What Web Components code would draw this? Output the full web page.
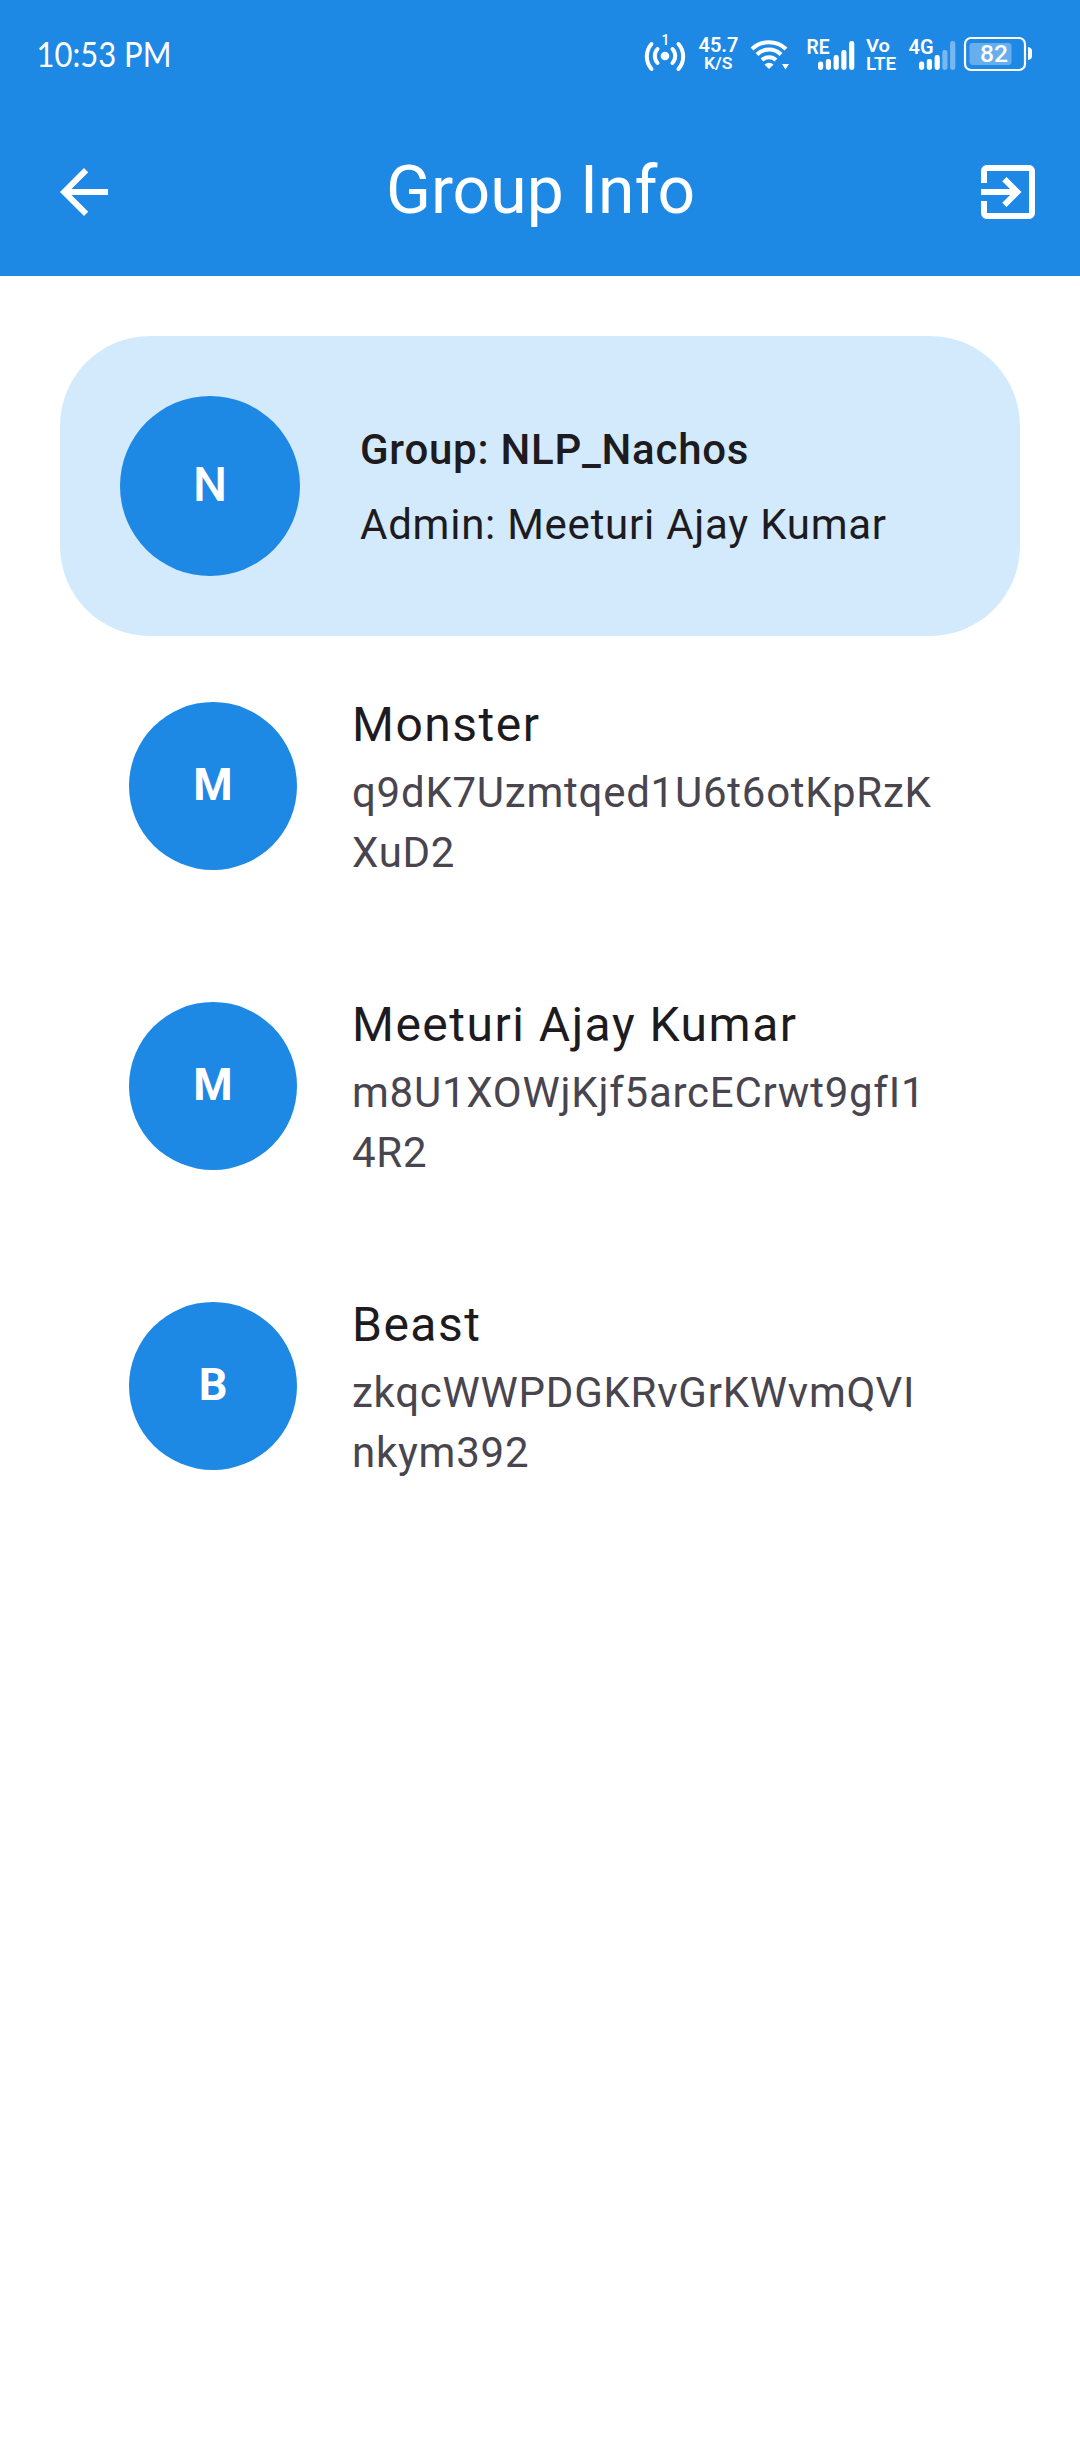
<!DOCTYPE html>
<html lang="en">
<head>
<meta charset="utf-8">
<title>Group Info</title>
<style>
html,body{margin:0;background:#fff}
body{font-family:Roboto,sans-serif;color:#1d1b20}
</style>
</head>
<body>
<group-page></group-page>
<script>
function define(name, html){
  const t=document.createElement('template');
  t.innerHTML=html;
  customElements.define(name,class extends HTMLElement{
    constructor(){super();this.attachShadow({mode:'open'}).appendChild(t.content.cloneNode(true));}
  });
}
// Five signal bars; the last `dim` of them are faded.
const bars=(x,dim)=>[[0,61.5],[7.8,59],[15.6,55],[23.3,50],[31.1,41]].map(([d,y],i)=>
  `<rect x="${x+d}" y="${y}" width="5.2" height="${70-y}" rx="2.4" opacity="${i>=5-dim?.4:1}"/>`).join('');

define('status-bar',`
<style>
:host{display:flex;justify-content:space-between;height:108px;padding:0 40px 0 28px;color:#fff}
.icons{display:flex}
svg{display:block;height:108px;fill:#fff;font-family:Roboto,sans-serif;font-weight:600}
.line{fill:none;stroke:#fff;stroke-linecap:round}
</style>
<svg width="160" viewBox="28 0 160 108"><text x="36.5" y="67" font-family="Lato,sans-serif" font-weight="400" font-size="34.5" textLength="135" lengthAdjust="spacingAndGlyphs">10:53 PM</text></svg>
<div class="icons">
<svg width="50" viewBox="640 0 50 108"><circle cx="665" cy="56" r="4.3"/>
<path class="line" stroke-width="4" d="M657.5 49a10.5 10.5 0 0 0 0 14M672.5 49a10.5 10.5 0 0 1 0 14M651.5 44a19 19 0 0 0 0 25M678.5 44a19 19 0 0 1 0 25"/>
<text x="661.5" y="45" font-size="14" font-weight="500">1</text></svg>
<svg width="55" viewBox="690 0 55 108"><text x="698.5" y="51.5" font-size="21" textLength="40" lengthAdjust="spacingAndGlyphs">45.7</text><text x="704" y="69" font-size="16" textLength="28.5" lengthAdjust="spacingAndGlyphs">K/S</text></svg>
<svg width="55" viewBox="745 0 55 108"><path class="line" style="stroke-linecap:butt" stroke-width="4" d="M752 49a24.5 24.5 0 0 1 34 0M757 54.5a17 17 0 0 1 24 0M762 60a10 10 0 0 1 14 0"/><path d="M764.500 64.500q4.500-3.500 9 0l-4.500 4.500zM782 64h7l-3.500 5.500z"/></svg>
<svg width="60" viewBox="800 0 60 108"><text x="806.5" y="53.5" font-size="21" textLength="23" lengthAdjust="spacingAndGlyphs">RE</text>${bars(818,0)}</svg>
<svg width="45" viewBox="860 0 45 108"><text x="866" y="52" font-size="19" textLength="24" lengthAdjust="spacingAndGlyphs">Vo</text><text x="866" y="70" font-size="18.5" textLength="30" lengthAdjust="spacingAndGlyphs">LTE</text></svg>
<svg width="55" viewBox="905 0 55 108"><text x="908.5" y="53.5" font-size="21" textLength="25" lengthAdjust="spacingAndGlyphs">4G</text>${bars(919,2)}</svg>
<svg width="80" viewBox="960 0 80 108"><rect x="965" y="38" width="60" height="32" rx="6" fill="none" stroke="#fff" stroke-width="2.2"/><rect x="969.5" y="43" width="42" height="22" rx="3" opacity=".32"/><path d="M1028 47q4 1 4 3.500v6q0 2.500-4 3.500z"/><text x="980" y="62" font-size="24.500" font-weight="500" textLength="28" lengthAdjust="spacingAndGlyphs">82</text></svg>
</div>`);

define('icon-button',`
<style>:host{display:block;width:72px;height:72px;color:#fff}::slotted(svg){display:block;width:72px;height:72px;fill:currentColor}</style><slot></slot>`);

define('app-bar',`
<style>
:host{display:block;height:276px;background:#1e88e5;color:#fff}
.row{display:flex;align-items:center;justify-content:space-between;height:168px;padding:0 36px 0 48px}
h1{margin:0 11px 0 0;padding-bottom:3px;font-weight:400;font-size:66px;line-height:84px}
</style>
<status-bar></status-bar>
<div class="row"><slot name="leading"></slot><h1><slot></slot></h1><slot name="action"></slot></div>`);

define('letter-avatar',`
<style>
:host{display:flex;flex:none;align-items:center;justify-content:center;box-sizing:border-box;width:var(--size,168px);height:var(--size,168px);padding-bottom:var(--lift,1px);border-radius:50%;background:#1e88e5;color:#fff;font-weight:var(--letter-weight,700);font-size:var(--letter,45px);line-height:1.17}
</style><slot></slot>`);

define('group-card',`
<style>
:host{display:flex;align-items:center;gap:60px;height:300px;margin:60px 60px 0;padding:0 60px;box-sizing:border-box;border-radius:90px;background:#d3eafd;--size:180px;--letter:48px;--lift:1px;--letter-weight:500}
.text{display:flex;flex-direction:column;gap:15px;padding-top:2px;font-size:42px;line-height:60px;letter-spacing:.75px;white-space:nowrap}
.name{font-weight:500}
</style>
<slot name="avatar"></slot><div class="text"><div class="name"><slot name="name"></slot></div><div><slot name="admin"></slot></div></div>`);

define('member-tile',`
<style>
:host{display:flex;align-items:flex-start;gap:55px;height:300px;box-sizing:border-box;padding:66px 0 0 129px}
.text{width:582px;margin-top:-13px}
.name{font-size:48px;line-height:72px;letter-spacing:1.5px}
.id{margin-top:1.5px;font-size:42px;line-height:60px;letter-spacing:.75px;color:#49454f;word-break:break-all}
</style>
<slot name="avatar"></slot><div class="text"><div class="name"><slot name="name"></slot></div><div class="id"><slot></slot></div></div>`);

define('group-page',`
<style>:host{display:block;min-height:2460px;background:#fff}</style>
<app-bar>
<icon-button slot="leading"><svg viewBox="0 0 24 24"><path d="M20 11H7.830l5.590-5.590L12 4l-8 8 8 8 1.410-1.410L7.830 13H20z"/></svg></icon-button>
Group Info
<icon-button slot="action"><svg viewBox="0 0 24 24"><path d="M10.090 15.590L11.500 17l5-5-5-5-1.410 1.410L12.670 11H3v2h9.670zM19 3H5c-1.110 0-2 .9-2 2v4h2V5h14v14H5v-4H3v4c0 1.100.89 2 2 2h14c1.100 0 2-.9 2-2V5c0-1.100-.9-2-2-2z"/></svg></icon-button>
</app-bar>
<group-card><letter-avatar slot="avatar">N</letter-avatar><span slot="name">Group: NLP_Nachos</span><span slot="admin">Admin: Meeturi Ajay Kumar</span></group-card>
<member-tile><letter-avatar slot="avatar">M</letter-avatar><span slot="name">Monster</span>q9dK7Uzmtqed1U6t6otKpRzKXuD2</member-tile>
<member-tile><letter-avatar slot="avatar">M</letter-avatar><span slot="name">Meeturi Ajay Kumar</span>m8U1XOWjKjf5arcECrwt9gfI14R2</member-tile>
<member-tile><letter-avatar slot="avatar">B</letter-avatar><span slot="name">Beast</span>zkqcWWPDGKRvGrKWvmQVInkym392</member-tile>`);
</script>
</body>
</html>
